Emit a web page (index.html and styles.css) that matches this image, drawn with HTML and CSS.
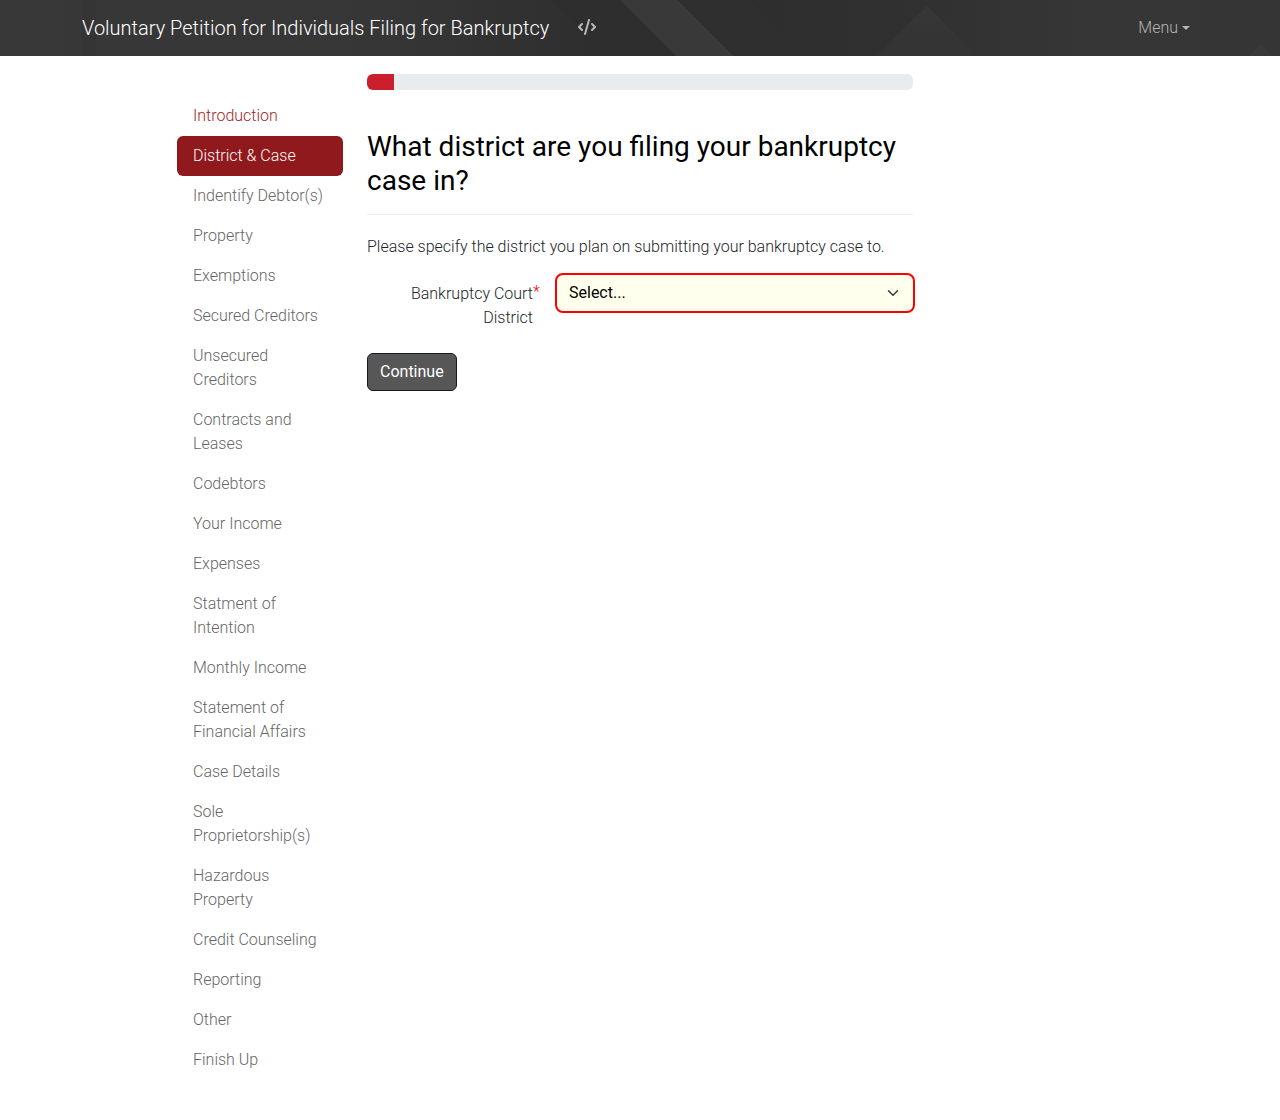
FILE: index.html
```html
<!DOCTYPE html>
<html lang="en">
<head>
<meta charset="utf-8">
<meta name="viewport" content="width=device-width, initial-scale=1">
<title>Voluntary Petition for Individuals Filing for Bankruptcy</title>
<link rel="stylesheet" href="styles.css">
</head>
<body>
<header class="navbar">
  <svg class="navbar-pattern" viewBox="0 0 1280 56" preserveAspectRatio="xMidYMid slice" aria-hidden="true">
    <defs>
      <linearGradient id="shade" x1="0" x2="1" y1="0" y2="0">
        <stop offset="0" stop-color="#383838"/>
        <stop offset="0.3" stop-color="#363636"/>
        <stop offset="0.4" stop-color="#313131"/>
        <stop offset="0.5" stop-color="#2d2d2d"/>
        <stop offset="0.7" stop-color="#303030"/>
        <stop offset="0.85" stop-color="#363636"/>
        <stop offset="1" stop-color="#353535"/>
      </linearGradient>
      <linearGradient id="peak" x1="0" x2="0" y1="0" y2="1">
        <stop offset="0" stop-color="#373737"/>
        <stop offset="1" stop-color="#333"/>
      </linearGradient>
    </defs>
    <rect width="1280" height="56" fill="url(#shade)"/>
    <path d="M82 0h14v56H82z" fill="#353535"/>
    <path d="M550 0h70l56 56h-66z" fill="#2e2e2e"/>
    <path d="M620 0h58l56 56h-58z" fill="#393939"/>
    <path d="M678 0h74l50 56h-68z" fill="#2f2f2f"/>
    <path d="M927 6l50 50H877z" fill="url(#peak)"/>
    <path d="M1261 44l12 12h-24z" fill="#393939"/>
  </svg>
  <div class="container navbar-inner">
    <a class="navbar-brand" href="#">Voluntary Petition for Individuals Filing for Bankruptcy</a>
    <a class="source-link" href="#" aria-label="Source">
      <svg width="20" height="16" viewBox="0 0 640 512" fill="none" stroke="currentColor" stroke-width="64" stroke-linecap="round" stroke-linejoin="round" aria-hidden="true">
        <path d="M384 32L256 480M160 160L64 256l96 96M480 160l96 96-96 96"/>
      </svg>
    </a>
    <button class="menu-toggle" type="button">Menu</button>
  </div>
</header>
<div class="container layout">
  <nav class="sections" aria-label="Sections">
    <a class="section visited" href="#">Introduction</a>
    <a class="section active" href="#" aria-current="page">District &amp; Case</a>
    <a class="section" href="#">Indentify Debtor(s)</a>
    <a class="section" href="#">Property</a>
    <a class="section" href="#">Exemptions</a>
    <a class="section" href="#">Secured Creditors</a>
    <a class="section" href="#">Unsecured Creditors</a>
    <a class="section" href="#">Contracts and Leases</a>
    <a class="section" href="#">Codebtors</a>
    <a class="section" href="#">Your Income</a>
    <a class="section" href="#">Expenses</a>
    <a class="section" href="#">Statment of Intention</a>
    <a class="section" href="#">Monthly Income</a>
    <a class="section" href="#">Statement of Financial Affairs</a>
    <a class="section" href="#">Case Details</a>
    <a class="section" href="#">Sole Proprietorship(s)</a>
    <a class="section" href="#">Hazardous Property</a>
    <a class="section" href="#">Credit Counseling</a>
    <a class="section" href="#">Reporting</a>
    <a class="section" href="#">Other</a>
    <a class="section" href="#">Finish Up</a>
  </nav>
  <main class="question">
    <div class="progress" role="progressbar" aria-label="Interview progress" aria-valuenow="5" aria-valuemin="0" aria-valuemax="100">
      <div class="progress-bar" style="width: 5%"></div>
    </div>
    <h1 class="title">What district are you filing your bankruptcy case in?</h1>
    <p class="intro">Please specify the district you plan on submitting your bankruptcy case to.</p>
    <form>
      <div class="field">
        <label class="field-label required" for="district">Bankruptcy Court District</label>
        <div class="select-wrap">
          <select class="select" id="district" required>
            <option value="">Select...</option>
          </select>
          <svg class="chevron" width="12" height="12" viewBox="0 0 16 16" fill="none" stroke="#343a40" stroke-width="2" stroke-linecap="round" stroke-linejoin="round" aria-hidden="true">
            <path d="M2 5l6 6 6-6"/>
          </svg>
        </div>
      </div>
      <button class="continue" type="submit">Continue</button>
    </form>
  </main>
</div>
</body>
</html>
```

FILE: styles.css
```css
*,
*::before,
*::after {
  box-sizing: border-box;
}

body {
  margin: 0;
  background: #fff;
  color: #212529;
  font: 300 16px/24px Roboto, sans-serif;
}

a {
  color: inherit;
  text-decoration: none;
}

.container {
  width: 100%;
  max-width: 1140px;
  margin: 0 auto;
  padding: 0 12px;
}

.navbar {
  position: relative;
  background: #333;
}

.navbar-pattern {
  position: absolute;
  inset: 0;
  width: 100%;
  height: 100%;
}

.navbar-inner {
  position: relative;
  display: flex;
  align-items: center;
  min-height: 56px;
}

.navbar-brand {
  margin-right: 20px;
  color: #fff;
  font-size: 20px;
  line-height: 30px;
}

.source-link {
  display: flex;
  padding: 0 8px 2px;
  color: #b9b9b9;
}

.menu-toggle {
  display: flex;
  align-items: center;
  gap: 4px;
  margin-left: auto;
  padding: 8px;
  border: 0;
  background: none;
  color: #b5b5b5;
  font: inherit;
}

.menu-toggle::after {
  content: "";
  border: 4px solid transparent;
  border-top-color: currentColor;
  border-bottom: 0;
}

.layout {
  display: grid;
  grid-template-columns: repeat(12, minmax(0, 1fr));
  column-gap: 24px;
}

.sections {
  grid-column: 2 / span 2;
  display: flex;
  flex-direction: column;
  padding: 40px 0;
}

.section {
  padding: 8px 16px;
  border-radius: 6px;
  color: #666;
}

.section.visited {
  color: #a01f26;
}

.section.active {
  background: #8f191c;
  color: #fff;
}

.question {
  grid-column: 4 / span 6;
  padding: 18px 0;
}

.progress {
  height: 16px;
  overflow: hidden;
  border-radius: 6px;
  background: #e9ecef;
}

.progress-bar {
  height: 100%;
  background: #cc1f2d;
}

.title {
  margin: 40px 0 20px;
  padding-bottom: 16px;
  border-bottom: 1px solid #eee;
  color: #000;
  font-size: 28px;
  font-weight: 400;
  line-height: 34px;
}

.intro {
  margin: 0 0 16px;
}

.field {
  display: grid;
  grid-template-columns: repeat(6, minmax(0, 1fr));
  column-gap: 24px;
  margin-bottom: 16px;
}

.field-label {
  position: relative;
  grid-column: span 2;
  padding: 7px 0;
  text-align: right;
}

.field-label.required::after {
  content: "*";
  position: absolute;
  top: 5px;
  left: 100%;
  color: #f00;
}

.select-wrap {
  position: relative;
  grid-column: span 4;
}

.select {
  display: block;
  width: 100%;
  height: 36px;
  padding: 0 36px 0 12px;
  border: 0;
  border-radius: 6px;
  outline: 2px solid #f00;
  background: #ffffee;
  color: #000;
  font: 400 16px/24px Roboto, sans-serif;
  appearance: none;
}

.chevron {
  position: absolute;
  top: 12px;
  right: 14px;
  pointer-events: none;
}

.continue {
  padding: 6px 12px;
  border: 1px solid #151b20;
  border-radius: 6px;
  background: #575757;
  color: #fff;
  font: 400 16px/24px Roboto, sans-serif;
}
```
